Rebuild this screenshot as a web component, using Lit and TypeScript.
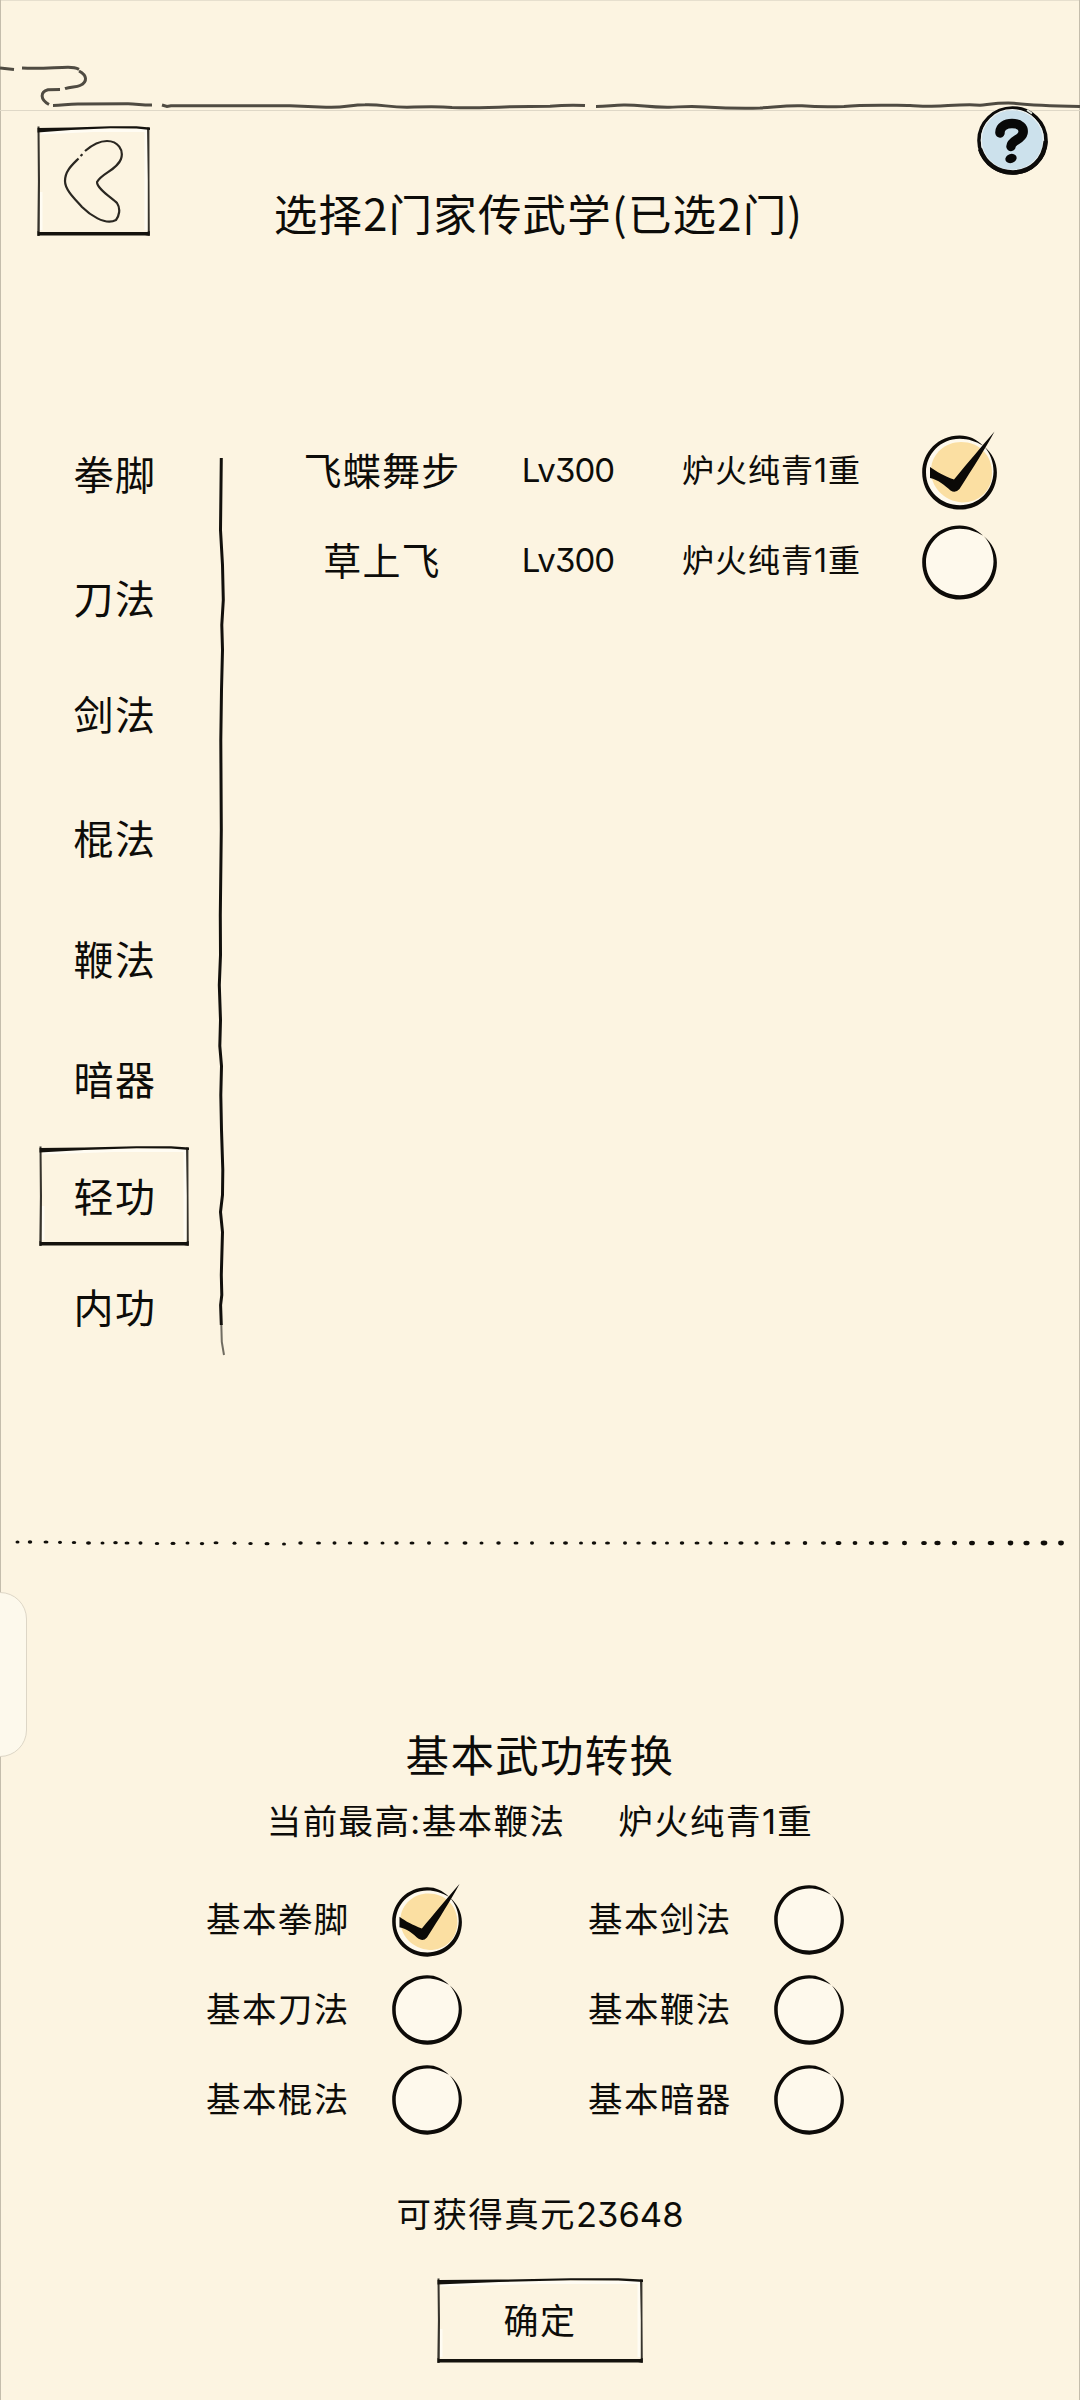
import { LitElement, html, css, svg } from "lit";
import { customElement, property, state } from "lit/decorators.js";

interface Category {
  name: string;
  gap: number;
}

// The menu is spaced by hand, gap is the room above each entry.
const CATEGORIES: Category[] = [
  { name: "拳脚", gap: 0 },
  { name: "刀法", gap: 25 },
  { name: "剑法", gap: 17 },
  { name: "棍法", gap: 25 },
  { name: "鞭法", gap: 22 },
  { name: "暗器", gap: 21 },
  { name: "轻功", gap: 17 },
  { name: "内功", gap: 13 },
];

const SKILLS = [
  { name: "飞蝶舞步", level: "Lv300", rank: "炉火纯青1重" },
  { name: "草上飞", level: "Lv300", rank: "炉火纯青1重" },
];

const BASICS = ["基本拳脚", "基本剑法", "基本刀法", "基本鞭法", "基本棍法", "基本暗器"];

// centre of every ink dot in the divider
const DOT_X = [
  17.5, 30, 46, 60, 74, 88.5, 102.5, 115.5, 127, 140.5, 157, 173, 187.5, 202, 216, 234.5, 250.5,
  267, 284, 300.5, 318.5, 334.5, 350, 366, 382.5, 396.5, 412, 429, 446.5, 465, 481.5, 498.5, 516,
  532, 552, 565.5, 581, 594, 607.5, 625, 638.5, 654, 667, 682, 697, 710.5, 726, 741, 756.5, 773,
  787.5, 805, 823.5, 838.5, 855, 871.5, 885.5, 904.5, 924, 937.5, 954.5, 972, 991, 1010.5, 1026.5,
  1044, 1061,
];
const DOT_Y = [0, 0, 0, 0.3, 0.6, 1, 0.9, 0.7, 1, 1, 1.6, 1.4, 1, 1.6, 0.8, 1.2, 1.5, 1.7, 1.9];

@customElement("ink-check")
export class InkCheck extends LitElement {
  @property({ type: Boolean, reflect: true })
  checked = false;

  static styles = css`
    :host {
      display: block;
    }

    svg {
      display: block;
      width: 100%;
      height: 100%;
      overflow: visible;
    }
  `;

  render() {
    return html`<svg viewBox="0 0 75 75">
      <circle cx="37.5" cy="37.5" r="35" fill="#fef9ec" />
      ${this.checked
        ? svg`<path d="M9 34C10 18 24 7 39 7c18 0 31 13 31 31S57 67.500 40 67.500C22 66 8 52 9 34z" fill="#fbdfa2" />`
        : ""}
      <path
        fill="#0d0b08"
        fill-rule="evenodd"
        d="M61 10.500C54 4 47 .4 38 .4 17 0 .2 16.500 .2 37.500 .2 58.500 17 74.600 38 74.600c21 0 36.900-16 36.900-37C74.900 27 70 18 62 11.200c6.500 7.500 9.500 16 9.500 25.300C71.200 56 56.500 70.200 38 70.200 19 70.200 4 56 4 37.500 4 19 18.500 3.800 37.500 3.700 46 3.600 54 6.500 61 10.500z"
      />
      ${this.checked
        ? svg`<path d="M8 32c7 5 14 9 24 12.500C44 30 59 12 72.500 -3.500 63 14 51 33 37.500 54q-4 4.500 -9 1.500C23 50.500 16 44.500 8 43z" fill="#0b0907" />`
        : ""}
    </svg>`;
  }
}

@customElement("ink-box")
export class InkBox extends LitElement {
  @property({ type: Number })
  w = 100;

  @property({ type: Number })
  h = 100;

  static styles = css`
    :host {
      display: grid;
      place-items: center;
    }

    svg,
    .content {
      grid-area: 1 / 1;
    }

    svg {
      display: block;
    }
  `;

  render() {
    const w = this.w;
    const h = this.h;
    return html`
      <svg width=${w} height=${h} viewBox="0 0 ${w} ${h}">
        <path
          d="M4 7 L${w * 0.5} 4.500 H${w - 4} V${h - 6} M4 ${h * 0.6} V${h - 6}"
          fill="none"
          stroke="#fffef8"
          stroke-width="3"
          opacity=".8"
        />
        <g fill="#14120d">
          <path d="M0.500 0.500 H2.500 L3 ${h / 2} L2.700 ${h} H0.300 L0.900 ${h / 2} Z" opacity=".85" />
          <path
            d="M0.500 2 L${w * 0.3} 1.600 L${w * 0.65} 0.300 L${w * 0.88} 0.200 L${w} 1.500 V4 L${w * 0.88} 2.500 L${w * 0.65} 2.300 L${w * 0.3} 4 L0.500 6.600 Z"
          />
          <path
            d="M${w - 3} 1.500 H${w - 0.6} L${w - 0.5} ${h / 2} L${w - 0.2} ${h - 1} H${w - 2.2} L${w - 2.2} ${h / 2} Z"
            opacity=".85"
          />
          <path d="M0.500 ${h - 5} L2.500 ${h - 3.9} H${w - 3} L${w - 0.2} ${h - 5} V${h} L${w - 5} ${h - 0.6} H0.500 Z" />
        </g>
      </svg>
      <div class="content"><slot></slot></div>
    `;
  }
}

@customElement("app-root")
export class AppRoot extends LitElement {
  @state()
  category = "轻功";

  @state()
  skill = "飞蝶舞步";

  @state()
  basic = "基本拳脚";

  static styles = css`
    :host {
      display: block;
      position: relative;
      box-sizing: border-box;
      width: 1080px;
      height: 2400px;
      overflow: hidden;
      background: #fcf4e1;
      box-shadow: inset 1px 0 #c4bdac, inset -1px 0 #c4bdac, inset 0 1px #e6dfce;
      color: #0d0c09;
      font-family: Inter, "Noto Sans CJK SC", sans-serif;
      font-feature-settings: "cv09";
      white-space: nowrap;
    }

    svg {
      display: block;
    }

    .scenery {
      border-bottom: 1px solid #dfd8c7;
    }

    .header {
      display: grid;
      grid-template-columns: 113px 1fr 71px;
      align-items: start;
      height: 314px;
      padding: 0 32px 0 37px;
      box-sizing: border-box;
    }

    .back {
      margin-top: 15px;
    }

    .title {
      margin: 72px 50px 0 0;
      text-align: center;
      font-family: "Noto Sans CJK SC", sans-serif;
      font-size: 43.5px;
      letter-spacing: 1.2px;
      line-height: 60px;
      font-weight: 400;
    }

    .help {
      margin-top: -5px;
    }

    .main {
      display: flex;
      align-items: flex-start;
      height: 1104px;
    }

    .menu {
      width: 150px;
      padding-left: 39px;
    }

    .entry {
      display: grid;
      place-items: center;
      height: 99px;
      font-size: 40px;
      letter-spacing: 1.6px;
      line-height: 60px;
    }

    .label {
      display: block;
      padding: 3px 0 0 2px;
    }

    .rule {
      margin: 33px 0 0 21px;
    }

    .skills {
      margin-left: 8px;
    }

    .skill {
      display: grid;
      grid-template-columns: 284px 88px 310px 75px;
      align-items: center;
      height: 90px;
    }

    .name {
      padding-bottom: 4px;
      text-align: center;
      font-size: 38px;
      letter-spacing: 1.2px;
    }

    .level {
      justify-self: center;
      font-size: 33px;
      letter-spacing: -0.9px;
    }

    .rank {
      padding: 0 0 4px 70px;
      font-size: 32px;
      letter-spacing: 1px;
    }

    .skill ink-check {
      width: 75px;
      height: 75px;
      margin-top: 4px;
    }

    .convert {
      display: flex;
      flex-direction: column;
      align-items: center;
    }

    .subtitle {
      margin: 171px 0 0;
      font-size: 43.5px;
      letter-spacing: 1.3px;
      line-height: 56px;
      font-weight: 400;
    }

    .best {
      display: flex;
      gap: 53px;
      margin-top: 13px;
      font-size: 34.5px;
      letter-spacing: 1.4px;
      line-height: 50px;
    }

    .basics {
      display: grid;
      grid-template-columns: 256px 256px;
      grid-auto-rows: 90px;
      column-gap: 126px;
      margin: 28px 30px 0 0;
    }

    .basic {
      display: flex;
      align-items: center;
      justify-content: space-between;
      font-size: 34.5px;
      letter-spacing: 1.4px;
    }

    .basic span {
      padding-bottom: 6px;
    }

    .basic ink-check {
      width: 70px;
      height: 70px;
    }

    .basic ink-check[checked] {
      margin-top: 4px;
    }

    .gain {
      margin-top: 45px;
      font-size: 34.5px;
      letter-spacing: 1.4px;
      line-height: 50px;
    }

    .amount {
      letter-spacing: 0;
    }

    .confirm {
      margin-top: 38px;
      font-size: 35px;
      letter-spacing: 1.4px;
      line-height: 50px;
    }

    .handle {
      position: absolute;
      left: -2px;
      top: 1592px;
      width: 29px;
      height: 165px;
      box-sizing: border-box;
      border: 1px solid #ddd6c6;
      border-radius: 0 27px 27px 0;
      background: #fdf9ec;
    }
  `;

  renderScenery() {
    return html`<svg class="scenery" width="1080" height="110" viewBox="0 0 1080 110">
      <g fill="none" stroke="#4f4b42" stroke-width="3">
        <path d="M0 68l14 1.500M22 68c18 1 32-.5 46-.7 4 0 8 .5 11 2" />
        <path d="M79 71c8 4 9 11 1 14.500-4 2-9 1-15 3.200M60 89.500l-12 .2c-8 2-8 10 1 14.800" />
        <path d="M53 105.500c10 0 15-1.800 27-1.500l48-.2c8 0 16 1.500 24 1.200" />
        <path d="M162 105l5 1.500 4-.8h119l36 1.500c18 1 24-2.400 39-2.400 18-.5 22 2.400 42 2.400 20-.5 30-1 45 .2 14 .8 38 .3 58-.7l40 -.5c12-1 22-1.200 35-.7" />
        <path d="M596 106.500c12 0 18-1.700 29-1.500 18 0 22 2.400 44 2.200 14-.4 22-1.200 36-.2 18 1 32 1.600 55 1 16-1 26-2.700 42-2.200 14 1.200 24 1.500 42 .7 20-2 42-1.200 66-1 18 1 24 1.500 38 0 16-.8 24-1 32-.3 14-1.500 20-2.700 34-2 14 1.700 24 2.400 66 3.300" />
      </g>
    </svg>`;
  }

  renderBackArrow() {
    return html`<svg width="62" height="84" viewBox="0 0 62 84" fill="none" stroke="#2a2721" stroke-width="2.2">
      <path d="M22 12C29 6 36 2 44 2c11 0 17 9 14 18-4 11-19 14-24 23 0 7 15 16 20 21 4 6 2 13-1 17C42 87 26 75 19 68 12 60 2 51 2 42 2 32 9 26 15.500 19.500M17.500 17l2-1.800" />
    </svg>`;
  }

  renderHelp() {
    return html`<svg class="help" width="71" height="69" viewBox="0 0 71 69">
      <ellipse cx="35.500" cy="34.500" rx="33.500" ry="32.500" fill="#cce1ec" stroke="#0c0b0a" stroke-width="3.600" />
      <ellipse cx="35.300" cy="34" rx="31" ry="30.300" fill="none" stroke="#eef3f1" stroke-width="1.200" />
      <path d="M3 43C8 58 21 66.500 36 66.500 54 66 67 54 68.700 35" fill="none" stroke="#0c0b0a" stroke-width="4.400" />
      <path d="M50 4l5 3.500" stroke="#e4e8df" stroke-width="2" />
      <path d="M23 27C22.500 20.500 29 17.500 35 17.500c8 0 12 4 11 9.500C44.500 34 34.500 34 34 40.500" fill="none" stroke="#080808" stroke-width="9.500" stroke-linecap="round" stroke-linejoin="round" />
      <ellipse cx="34" cy="52.500" rx="5.800" ry="4.500" transform="rotate(-18 34 52.500)" fill="#080808" />
    </svg>`;
  }

  renderRule() {
    return html`<svg class="rule" width="22" height="900" viewBox="210 458 22 900" fill="none" stroke="#12100c">
      <path
        d="M221.300 458L220.500 530 222.500 565 223.300 600 221.800 625 222.500 650 221.500 690 220.800 740 221.300 830 220.300 915 220.500 955 219.300 985 220.500 1020 219.800 1046 221.500 1066 220.800 1095 221.500 1130 222.800 1170 222.500 1195 220.500 1212 222.500 1232 221.300 1275 221.800 1295 220.600 1305 221.300 1325"
        stroke-width="3"
      />
      <path d="M221.300 1324L221.800 1342 224 1355" stroke-width="2" opacity=".6" />
    </svg>`;
  }

  renderDivider() {
    return html`<svg width="1080" height="28" viewBox="0 0 1080 28" fill="#100e0a">
      ${DOT_X.map((x, i) => {
        const grow = Math.max(0, i - 44) * 0.04;
        const y = 13 + (DOT_Y[i] ?? 1);
        return svg`<ellipse cx=${x} cy=${y} rx=${2 + (i % 3) * 0.25 + grow} ry=${1.5 + (i % 2) * 0.15 + grow} />`;
      })}
    </svg>`;
  }

  renderEntry(item: Category) {
    const active = item.name === this.category;
    const label = html`<span class="label">${item.name}</span>`;
    return html`<div
      class="entry"
      style="margin-top: ${item.gap}px;"
      @click=${() => (this.category = item.name)}
    >
      ${active ? html`<ink-box .w=${150} .h=${100}>${label}</ink-box>` : label}
    </div>`;
  }

  render() {
    return html`
      ${this.renderScenery()}
      <div class="header">
        <ink-box class="back" .w=${113} .h=${110}>${this.renderBackArrow()}</ink-box>
        <h1 class="title">选择2门家传武学(已选2门)</h1>
        ${this.renderHelp()}
      </div>

      <div class="main">
        <div class="menu">${CATEGORIES.map((item) => this.renderEntry(item))}</div>
        ${this.renderRule()}
        <div class="skills">
          ${SKILLS.map(
            (item) => html`<div class="skill" @click=${() => (this.skill = item.name)}>
              <span class="name">${item.name}</span>
              <span class="level">${item.level}</span>
              <span class="rank">${item.rank}</span>
              <ink-check .checked=${item.name === this.skill}></ink-check>
            </div>`
          )}
        </div>
      </div>

      ${this.renderDivider()}

      <div class="convert">
        <h2 class="subtitle">基本武功转换</h2>
        <div class="best"><span>当前最高:基本鞭法</span><span>炉火纯青1重</span></div>
        <div class="basics">
          ${BASICS.map(
            (name) => html`<div class="basic" @click=${() => (this.basic = name)}>
              <span>${name}</span>
              <ink-check .checked=${name === this.basic}></ink-check>
            </div>`
          )}
        </div>
        <div class="gain">可获得真元<span class="amount">23648</span></div>
        <ink-box class="confirm" .w=${206} .h=${85}>确定</ink-box>
      </div>

      <div class="handle"></div>
    `;
  }
}
